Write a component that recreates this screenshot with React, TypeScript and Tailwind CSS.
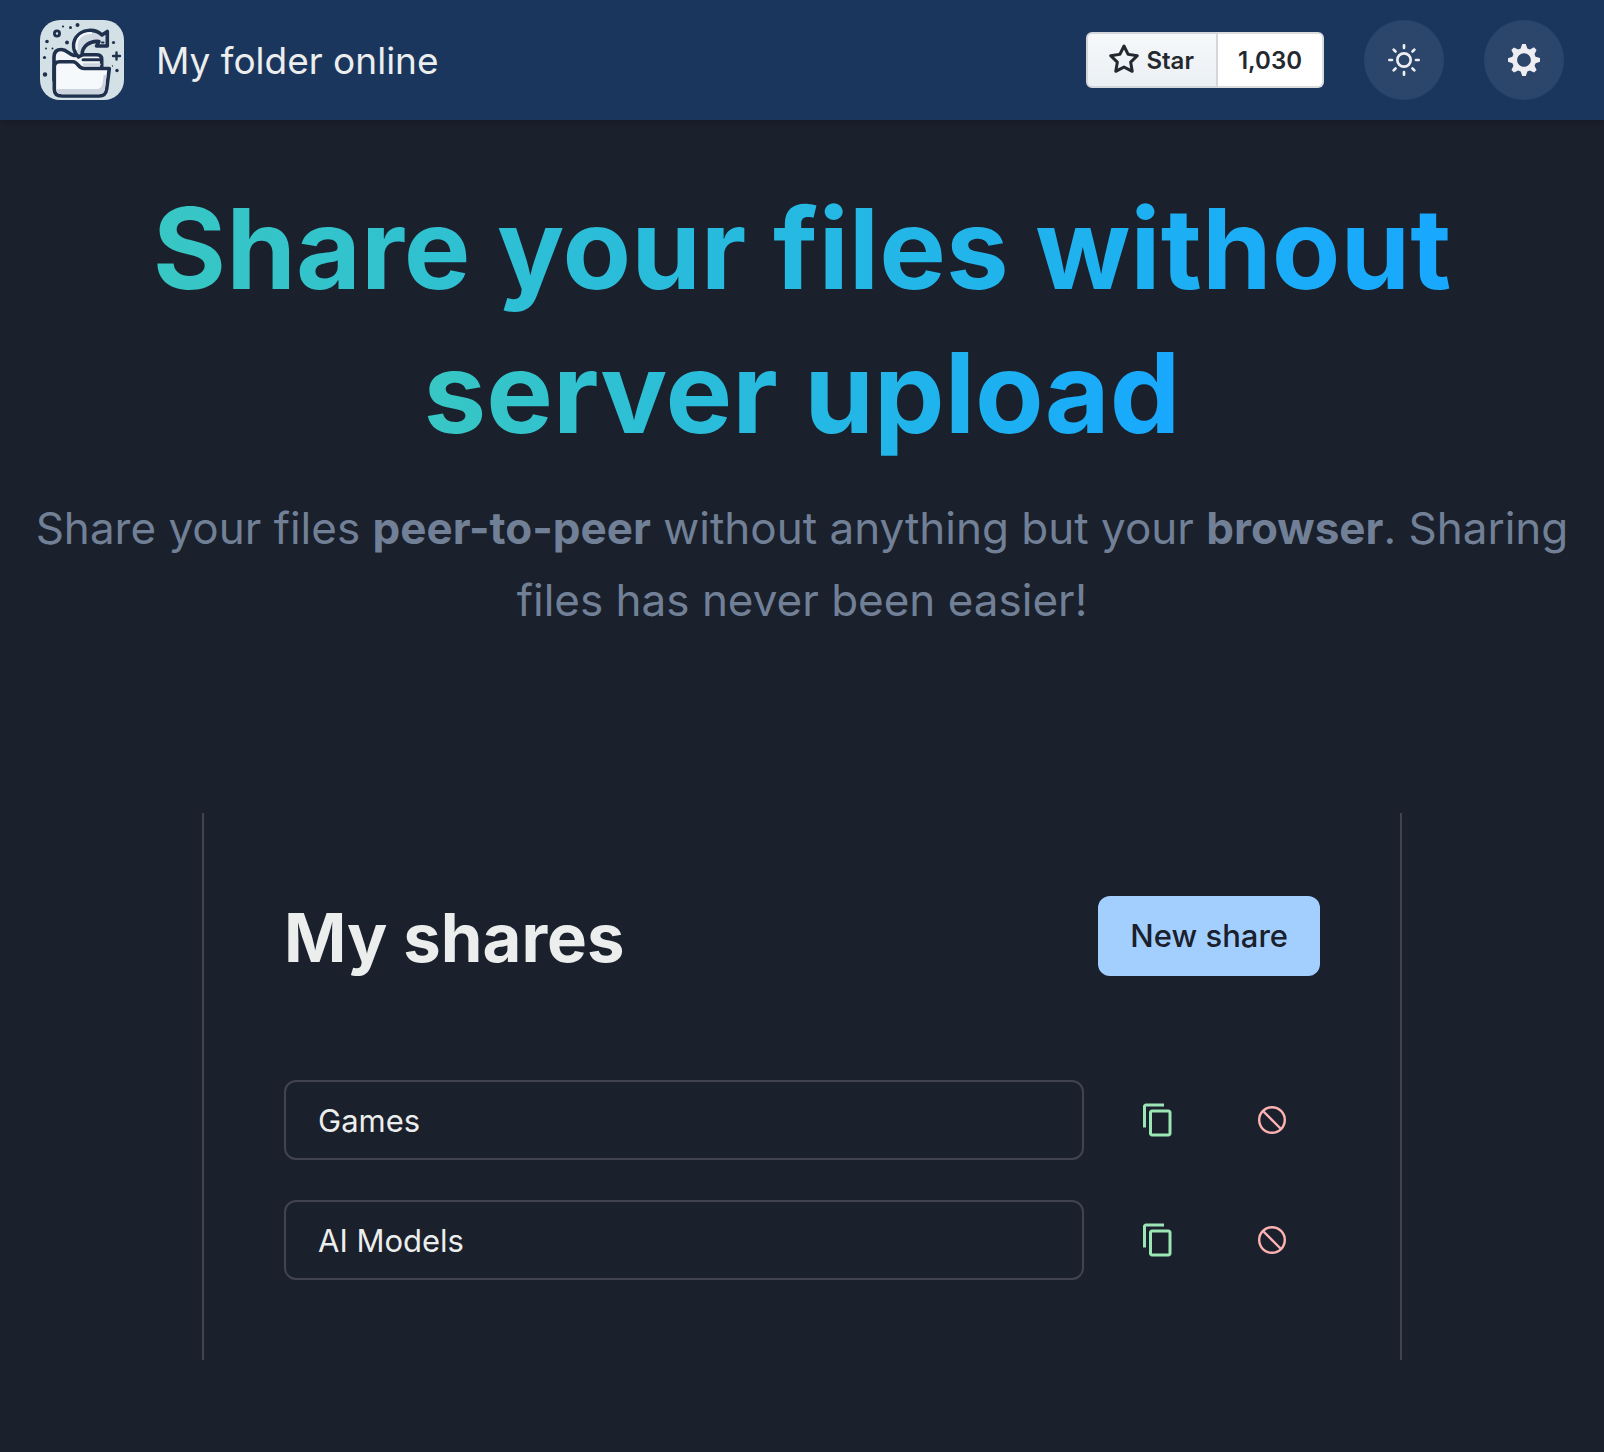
import React from "react";
import { MdContentCopy } from "react-icons/md";

function Logo() {
  return (
    <svg width="84" height="80" viewBox="0 0 84 80" role="img" aria-label="My folder online" className="shrink-0">
      <rect width="84" height="80" rx="20" fill="#d3e0e6" />
      <g fill="#20314e">
        <circle cx="23" cy="6.5" r="1.1" />
        <circle cx="30.5" cy="7.5" r="1.5" />
        <circle cx="37.5" cy="5" r="2" />
        <circle cx="7" cy="21.5" r="1.8" />
        <circle cx="6" cy="28.5" r="1" />
        <circle cx="12.5" cy="28.5" r="1" />
        <circle cx="4.5" cy="37.5" r="1.6" />
        <circle cx="5" cy="54.5" r="2.2" />
        <circle cx="27" cy="22.5" r="2" />
        <circle cx="73.5" cy="22.5" r="1.6" />
        <circle cx="77" cy="50.5" r="1.7" />
        <circle cx="72.5" cy="46" r="0.7" />
      </g>
      <circle cx="17" cy="13.5" r="2.6" fill="none" stroke="#20314e" strokeWidth="2.8" />
      <path d="M76.5 32.5v7M73 36h7" stroke="#20314e" strokeWidth="2.4" strokeLinecap="round" />
      <g stroke="#20314e" strokeWidth="3.6" strokeLinejoin="round" strokeLinecap="round">
        <path d="M14 60V37C14 32 17 29.5 21.5 29.5C27 29.5 28.5 34.5 34 35.5L42 34.7H57C60 34.7 61.7 36.5 61.7 39.5V50H30z" fill="#f2f6f8" />
        <path d="M43 39.7H60" strokeWidth="3" />
        <path d="M44 44.5H59.5" stroke="#c9d3de" strokeWidth="2.4" />
        <path d="M38.5 37C32.5 31 32.5 23 36 17.5C41.5 9 55 8 62 15L67.3 11.5V26H56.5L59 21.5C50 20.5 42 26 42 35z" fill="#d0d8e2" />
        <path d="M36.7 29C35.5 18 42 13 51 13" stroke="#f5f9fb" strokeWidth="2.2" fill="none" />
        <path d="M14.3 47C14.3 43.5 16 41.7 19.5 41.7H33C38 41.7 38 48.5 44 48.5H69.3L66.7 69C66 74 64 76 59 76H22C16.5 76 14.3 73 14.3 69z" fill="#f5f9fb" />
      </g>
      <path d="M62 22.5h1.5" stroke="#20314e" strokeWidth="2" strokeLinecap="round" />
      <path d="M16.2 69H57C62 69 63 64 63.5 55H66.5L65 68.5C64.4 72.5 62.5 74.2 59 74.2H22C18 74.2 16.2 72.5 16.2 69z" fill="#ccd4df" />
    </svg>
  );
}

function SunIcon() {
  return (
    <svg width="32" height="32" viewBox="0 0 24 24" fill="none" stroke="currentColor" strokeWidth="2" strokeLinecap="round" strokeLinejoin="round" aria-hidden="true">
      <circle cx="12" cy="12" r="5" />
      <path d="M12 1v2M12 21v2M4.22 4.22l1.42 1.42M18.36 18.36l1.42 1.42M1 12h2M21 12h2M4.22 19.78l1.42-1.42M18.36 5.64l1.42-1.42" />
    </svg>
  );
}

function GearIcon() {
  return (
    <svg width="32" height="32" viewBox="0 0 14 14" fill="currentColor" aria-hidden="true">
      <path d="M14,7.77 L14,6.17 L12.06,5.53 L11.61,4.44 L12.49,2.6 L11.36,1.47 L9.55,2.38 L8.46,1.93 L7.77,0.01 L6.17,0.01 L5.54,1.95 L4.43,2.4 L2.59,1.52 L1.46,2.65 L2.37,4.46 L1.92,5.55 L0,6.23 L0,7.82 L1.94,8.46 L2.39,9.55 L1.51,11.39 L2.64,12.52 L4.45,11.61 L5.54,12.06 L6.23,13.98 L7.82,13.98 L8.45,12.04 L9.56,11.59 L11.4,12.47 L12.53,11.34 L11.61,9.53 L12.08,8.44 L14,7.75 L14,7.77 Z M7,10 C5.34,10 4,8.66 4,7 C4,5.34 5.34,4 7,4 C8.66,4 10,5.34 10,7 C10,8.66 8.66,10 7,10 Z" />
    </svg>
  );
}

function StarIcon() {
  return (
    <svg width="32" height="32" viewBox="0 0 16 16" fill="currentColor" aria-hidden="true">
      <path d="M8 .25a.75.75 0 0 1 .673.418l1.882 3.815 4.21.612a.75.75 0 0 1 .416 1.279l-3.046 2.97.719 4.192a.751.751 0 0 1-1.088.791L8 12.347l-3.766 1.98a.75.75 0 0 1-1.088-.79l.72-4.194L.818 6.374a.75.75 0 0 1 .416-1.28l4.21-.611L7.327.668A.75.75 0 0 1 8 .25Zm0 2.445L6.615 5.5a.75.75 0 0 1-.564.41l-3.097.45 2.24 2.184a.75.75 0 0 1 .216.664l-.528 3.084 2.769-1.456a.75.75 0 0 1 .698 0l2.77 1.456-.53-3.084a.75.75 0 0 1 .216-.664l2.24-2.183-3.096-.45a.75.75 0 0 1-.564-.41L8 2.694Z" />
    </svg>
  );
}

function BanIcon() {
  return (
    <svg width="28" height="28" viewBox="0 0 28 28" fill="none" stroke="currentColor" strokeWidth="2.4" aria-hidden="true">
      <circle cx="14" cy="14" r="12.8" />
      <path d="M5 5l18 18" />
    </svg>
  );
}

const shares = ["Games", "AI Models"];

export default function App() {
  return (
    <div className="min-h-screen bg-[#1a202c] font-['Inter',sans-serif] text-[#eceeed]">
      <header className="flex h-[120px] items-center gap-10 bg-[#1a365d] px-10 shadow-md">
        <a href="#" className="flex items-center gap-8">
          <Logo />
          <span className="pt-0.5 text-[37px] leading-[60px]">My folder online</span>
        </a>
        <div className="ml-auto flex h-14 text-2xl leading-8 font-semibold text-[#24292f]">
          <a href="#star" className="flex items-center gap-1.5 rounded-l-md border-2 border-[#d3d7db] bg-gradient-to-b from-[#f6f8fa] to-[#ebf0f4] px-5">
            <StarIcon />
            <span className="pt-0.5 pr-0.5">Star</span>
          </a>
          <a href="#stargazers" className="flex items-center rounded-r-md border-2 border-l-0 border-[#d9dbdd] bg-white px-5 pt-0.5">1,030</a>
        </div>
        <button type="button" aria-label="Toggle color mode" className="flex size-20 items-center justify-center rounded-full bg-[#2c456a] text-[#eeeef2]">
          <SunIcon />
        </button>
        <button type="button" aria-label="Settings" className="flex size-20 items-center justify-center rounded-full bg-[#2c456a] text-[#eeeef2]">
          <GearIcon />
        </button>
      </header>

      <main className="px-8 pt-14">
        <div className="text-center">
          <h1 className="text-[112px] leading-[144px] font-bold">
            <span className="block">
              <span className="bg-gradient-to-r from-[#38c7c3] to-[#18a8ff] bg-clip-text text-transparent">Share your files without</span>
            </span>
            <span className="block">
              <span className="bg-gradient-to-r from-[#38c7c3] to-[#18a8ff] bg-clip-text text-transparent">server upload</span>
            </span>
          </h1>
          <p className="mt-7 text-[44px] leading-[72px] text-[#718096]">
            Share your files <strong>peer-to-peer</strong> without anything but your <strong>browser</strong>. Sharing files has never been easier!
          </p>
        </div>

        <section className="mx-auto mt-[177px] max-w-[1200px] border-x-2 border-[#41444e] p-20">
          <div className="flex items-center justify-between">
            <h2 className="pt-1 text-[67px] leading-[82px] font-bold">My shares</h2>
            <button type="button" className="h-20 rounded-xl bg-[#a3cfff] px-8 text-[31px] leading-10 font-medium text-[#1a202c]">New share</button>
          </div>
          <ul className="mt-[101px] flex flex-col gap-10">
            {shares.map((name) => (
              <li key={name} className="flex items-center">
                <input aria-label="Share name" readOnly value={name} className="h-20 min-w-0 flex-1 rounded-xl border-2 border-[#41444e] bg-transparent px-8 text-[31px] leading-10" />
                <button type="button" aria-label={`Copy link to ${name}`} className="ml-[34px] flex size-20 items-center justify-center text-[#9ae6b4]">
                  <MdContentCopy size={36} />
                </button>
                <button type="button" aria-label={`Stop sharing ${name}`} className="mr-2 ml-[34px] flex size-20 items-center justify-center text-[#feb2b2]">
                  <BanIcon />
                </button>
              </li>
            ))}
          </ul>
        </section>
      </main>
    </div>
  );
}
